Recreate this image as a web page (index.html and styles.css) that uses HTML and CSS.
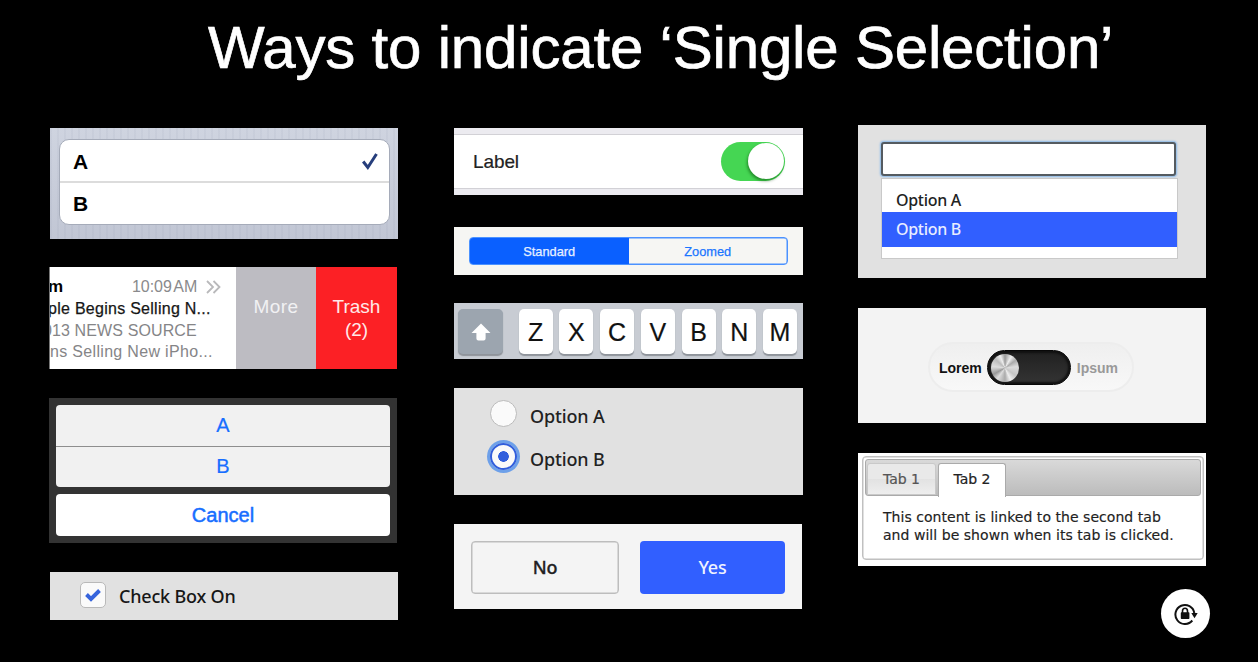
FILE: index.html
```html
<!DOCTYPE html>
<html lang="en">
<head>
<meta charset="utf-8">
<title>Ways to indicate ‘Single Selection’</title>
<link rel="stylesheet" href="styles.css">
</head>
<body>
<main class="slide">
  <h1 class="title">Ways to indicate ‘Single Selection’</h1>
  <div class="columns">
    <div class="column column-left">
      <section class="panel table-panel">
        <div class="table-list">
          <div class="table-row"><span>A</span>
            <svg class="table-check" width="18" height="20" viewBox="0 0 18 20"><path d="M2.200 9.500 L6.800 15.500 L15.500 2" fill="none" stroke="#263e7c" stroke-width="3"/></svg>
          </div>
          <div class="table-row"><span>B</span></div>
        </div>
      </section>
      <section class="panel swipe-panel">
        <div class="mail">
          <div class="mail-head"><b class="mail-from">m</b><span class="mail-time">10:09 AM</span>
            <svg width="16" height="14" viewBox="0 0 16 14"><path d="M2 1 L8 7 L2 13 M8.500 1 L14.500 7 L8.500 13" fill="none" stroke="#b9b9bb" stroke-width="1.8"/></svg>
          </div>
          <div class="mail-subject">ple Begins Selling N...</div>
          <div class="mail-source">013 NEWS SOURCE</div>
          <div class="mail-preview">ns Selling New iPho...</div>
        </div>
        <div class="action more">More</div>
        <div class="action trash">Trash<br>(2)</div>
      </section>
      <section class="panel sheet-panel">
        <div class="sheet-group">
          <div class="sheet-item">A</div>
          <div class="sheet-item">B</div>
        </div>
        <div class="sheet-cancel">Cancel</div>
      </section>
      <section class="panel checkbox-panel">
        <span class="checkbox"><svg width="18" height="14" viewBox="0 0 18 14"><path d="M2.500 6.500 L7 11 L15.500 2.500" fill="none" stroke="#3664dc" stroke-width="3.900"/></svg></span>
        <span class="checkbox-label">Check Box On</span>
      </section>
    </div>

    <div class="column column-middle">
      <section class="panel switch-panel">
        <div class="switch-row"><span class="switch-label">Label</span><span class="switch"><span class="switch-knob"></span></span></div>
      </section>
      <section class="panel segment-panel">
        <div class="segments"><span class="segment active">Standard</span><span class="segment">Zoomed</span></div>
      </section>
      <section class="panel keyboard-panel">
        <span class="key shift"><svg width="20" height="18" viewBox="0 0 20 18"><path d="M10 .5 L19.500 10 H14.600 V15.500 Q14.600 17.500 12.600 17.500 H7.400 Q5.400 17.500 5.400 15.500 V10 H.5 Z" fill="#fff"/></svg></span>
        <span class="key">Z</span><span class="key">X</span><span class="key">C</span><span class="key">V</span><span class="key">B</span><span class="key">N</span><span class="key">M</span>
      </section>
      <section class="panel radio-panel">
        <div class="radio-row"><span class="radio"></span><span>Option A</span></div>
        <div class="radio-row"><span class="radio selected"></span><span>Option B</span></div>
      </section>
      <section class="panel button-panel">
        <span class="button button-no">No</span>
        <span class="button button-yes">Yes</span>
      </section>
    </div>

    <div class="column column-right">
      <section class="panel select-panel">
        <div class="select-field"></div>
        <div class="select-menu">
          <div class="option">Option A</div>
          <div class="option highlighted">Option B</div>
        </div>
      </section>
      <section class="panel slider-panel">
        <div class="pill">
          <span class="pill-on">Lorem</span>
          <span class="slider"><span class="slider-knob"></span></span>
          <span class="pill-off">Ipsum</span>
        </div>
      </section>
      <section class="panel tabs-panel">
        <div class="tabs-box">
          <div class="tab-bar"><span class="tab">Tab 1</span><span class="tab current">Tab 2</span></div>
          <p class="tab-content">This content is linked to the second tab<br>and will be shown when its tab is clicked.</p>
        </div>
      </section>
      <div class="rotation-lock">
        <svg width="24" height="22" viewBox="0 0 24 22">
          <path d="M18.300 17.500 A9.500 9.500 0 1 1 20.300 10" fill="none" stroke="#111" stroke-width="2"/>
          <path d="M17.300 10 H23.700 L20.500 15.200 Z" fill="#111"/>
          <rect x="6.800" y="9.200" width="8.600" height="6.800" rx=".7" fill="#111"/>
          <path d="M8.500 10 V8 A2.500 2.700 0 0 1 13.500 8 V10" fill="none" stroke="#111" stroke-width="1.600"/>
        </svg>
      </div>
    </div>
  </div>
</main>
</body>
</html>
```

FILE: styles.css
```css
* { box-sizing: border-box; }
body { margin: 0; background: #000; font-family: "Liberation Sans", Arial, sans-serif; }
.slide { width: 1258px; height: 662px; overflow: hidden; background: #000; }
.title { margin: 0; height: 125px; padding: 13px 0 0 208px; color: #fff; font-size: 60px; line-height: 69px; font-weight: 400; white-space: nowrap; letter-spacing: -.18px; -webkit-text-stroke: .7px #fff; }
.columns { display: grid; grid-template-columns: 348px 349px 348px; column-gap: 56px; padding-left: 50px; align-items: start; }
.column { display: flex; flex-direction: column; }
.column-left, .column-middle { padding-top: 3px; }
.column-right { margin-left: -1px; margin-right: 1px; }
.panel { overflow: hidden; flex: none; }

.table-panel { height: 111px; padding: 11px 8px 0 9px; background: repeating-linear-gradient(90deg, rgba(90,100,130,.05) 0 2px, transparent 2px 7px), linear-gradient(#cfd4e0, #c1c6d4); }
.table-list { height: 86px; background: #fff; border: 1.500px solid #a5abb9; border-radius: 10px; }
.table-row { height: 42px; display: flex; align-items: center; justify-content: space-between; padding: 1px 10px 0 13px; font-size: 21px; font-weight: 700; }
.table-row + .table-row { margin-top: -1px; border-top: 2px solid #dcdcdc; padding-top: 1px; }

.swipe-panel { width: 348px; height: 102px; margin: 28px 0 0 -1px; display: flex; background: #fff; }
.mail { width: 187px; padding-top: 8px; overflow: hidden; white-space: nowrap; font-size: 16px; border-left: 1px solid #777; }
.mail > div { height: 22px; line-height: 22px; }
.mail .mail-head { height: 23px; display: flex; align-items: center; }
.mail-from { width: 84px; margin-left: -2px; font-size: 17px; }
.mail-time { color: #8a8a8c; width: 73px; letter-spacing: -.05px; word-spacing: -2px; }
.mail-subject { margin-left: -2px; color: #161616; letter-spacing: .27px; -webkit-text-stroke: .25px #161616; }
.mail .mail-source { height: 21px; line-height: 21px; margin-left: -7px; color: #858587; letter-spacing: .12px; }
.mail-preview { color: #858587; letter-spacing: .32px; }
.action { width: 81px; padding-top: 28px; text-align: center; color: #fff; font-size: 19px; line-height: 23px; }
.more { background: #bdbcc2; color: #f1f1f3; width: 80px; letter-spacing: .4px; }
.trash { background: #fc2025; color: #ffe9e9; }

.sheet-panel { width: 348px; height: 145px; margin: 29px 0 0 -1px; padding: 7px; background: #333; color: #176eff; font-size: 20px; text-align: center; }
.sheet-group { height: 82px; border-radius: 4px; background: #f1f1f1; -webkit-text-stroke: .2px #176eff; }
.sheet-item { height: 41px; line-height: 41px; }
.sheet-item + .sheet-item { border-top: 1px solid #8e8e8e; line-height: 39px; }
.sheet-cancel { height: 42px; margin-top: 7px; border-radius: 4px; background: #fff; line-height: 43px; -webkit-text-stroke: .5px #176eff; }

.checkbox-panel { height: 48px; margin-top: 29px; padding-left: 30px; display: flex; align-items: center; background: #e1e1e1; font: 500 18px "Noto Sans", sans-serif; letter-spacing: -.2px; color: #161616; }
.checkbox { width: 26px; height: 26px; margin: -2px 13px 0 0; border: 1px solid #b9b9b9; border-radius: 5px; background: #fafafa; display: flex; align-items: center; justify-content: center; }

.switch-panel { height: 67px; padding: 6px 0; background: #ecebf0; }
.switch-row { height: 55px; display: flex; align-items: center; justify-content: space-between; padding: 0 18px 0 19px; background: #fff; border: solid #d2d1d6; border-width: 1px 0; }
.switch-label { font-size: 19px; color: #222; letter-spacing: -.1px; -webkit-text-stroke: .2px #222; }
.switch { width: 64px; height: 39px; padding: 1px; margin-top: -1px; border-radius: 20px; background: #45d653; display: flex; justify-content: flex-end; }
.switch-knob { width: 36px; height: 36px; border-radius: 50%; background: #fff; box-shadow: -1px 2px 3px rgba(0,70,0,.5); }

.segment-panel { height: 48px; margin-top: 32px; padding: 10px 15px; background: #f6f6f3; }
.segments { height: 28px; display: flex; border: 1px solid #4b92ff; box-shadow: inset 0 0 0 .5px #4b92ff; border-radius: 4px; overflow: hidden; }
.segment { flex: 1; text-align: center; font-size: 12.800px; line-height: 27px; color: #1a75ff; -webkit-text-stroke: .25px currentColor; }
.segment.active { background: #0a60ff; color: #e7f0ff; }

.keyboard-panel { height: 56px; margin-top: 28px; padding: 6px 6px 0 4px; display: flex; justify-content: space-between; background: #c8ccd3; }
.key { width: 34px; height: 45px; border-radius: 5px; background: #fff; box-shadow: 0 1.500px 1px #8f949b; text-align: center; font-size: 25px; line-height: 46px; color: #111; -webkit-text-stroke: .2px #111; }
.key.shift { width: 45px; margin-right: 9px; background: #9ca5af; display: flex; align-items: center; justify-content: center; }

.radio-panel { height: 107px; margin-top: 29px; padding: 5px 0 0 36px; background: #e1e1e1; font: 500 18px "Noto Sans", sans-serif; letter-spacing: -.15px; color: #222; }
.radio-row { height: 43px; display: flex; align-items: center; gap: 13px; }
.radio-row span:last-child { padding-top: 2px; }
.radio { width: 27px; height: 27px; margin-top: -2px; border-radius: 50%; border: 1px solid #bbb; background: #fafafa; }
.radio.selected { border: 2px solid #315edc; background: radial-gradient(circle, #315edc 5px, #fafafa 5.600px); box-shadow: 0 0 0 3px #6da0e9; }

.button-panel { width: 348px; height: 85px; margin-top: 29px; padding: 17px 17px 0; display: flex; justify-content: space-between; background: #f4f4f4; font: 500 18px "Noto Sans", sans-serif; letter-spacing: -.2px; }
.button { height: 53px; line-height: 52px; border-radius: 4px; text-align: center; }
.button-no { width: 148px; border: 1px solid #bdbdbd; box-shadow: inset 0 0 0 .5px #bdbdbd; line-height: 50px; color: #222; -webkit-text-stroke: .3px #222; }
.button-yes { width: 145px; background: #315fff; color: #f0f3ff; }

.select-panel { height: 153px; padding: 17px 29px 0 23px; background: #e1e1e1; font: 500 16px "Noto Sans", sans-serif; letter-spacing: -.3px; }
.select-field { width: 295px; height: 34px; border: 2px solid #555b60; border-radius: 3px; background: #fff; box-shadow: 0 0 2px 1px #88b9ea; }
.select-menu { width: 297px; height: 81px; margin-top: 2px; padding-top: 8px; border: 1px solid #c9c9c9; background: #fff; color: #222; }
.option { height: 25px; line-height: 26px; padding-left: 14px; }
.option.highlighted { height: 35px; line-height: 35px; background: #315fff; color: #e8edff; }

.slider-panel { height: 115px; margin-top: 30px; padding-left: 70px; display: flex; align-items: center; background: #f3f3f3; }
.pill { width: 206px; height: 50px; margin-top: 3px; padding: 0 14px 0 9px; display: flex; align-items: center; justify-content: space-between; border-radius: 25px; border: 2px solid #ededed; background: linear-gradient(#efefef, #f8f8f8); font-size: 14px; font-weight: 700; }
.pill span { flex: none; }
.pill-on, .pill-off { padding-top: 2px; }
.pill-on { color: #111; }
.pill-off { color: #999; }
.slider { width: 84px; height: 35px; padding: 3px; border-radius: 18px; background: linear-gradient(#202020, #343434); border: 1px solid #080808; box-shadow: inset 0 0 2px 2px #111; }
.slider-knob { display: block; width: 28px; height: 28px; border-radius: 50%; background: conic-gradient(#999, #eee 8%, #aaa 15%, #ddd 23%, #c5c5c5 35%, #eee 43%, #aaa 50%, #ddd 60%, #999 67%, #ddd 77%, #bbb 87%, #eee 94%, #999); }

.tabs-panel { height: 113px; margin-top: 30px; padding: 3px 2px 0 4px; background: #fff; font-family: "DejaVu Sans", Verdana, sans-serif; color: #222; }
.tabs-box { height: 104px; padding: 2px; border: 1px solid #c0c0c0; box-shadow: inset 0 0 0 .5px #c0c0c0; border-radius: 4px; }
.tab-bar { height: 37px; padding: 3px 0 0 1px; display: flex; border: 1px solid #aaa; border-radius: 3px; background: linear-gradient(#d9d9d9, #bcbcbc); font-size: 14px; }
.tab { width: 69px; height: 32px; margin-right: 2px; border: 1px solid #c9c9c9; border-radius: 3px 3px 0 0; line-height: 30px; text-align: center; color: #555; background: linear-gradient(#e9e9e9 50%, #e2e2e2 50%, #eee); -webkit-text-stroke: .2px currentColor; }
.tab.current { width: 68px; height: 34px; border: 1px solid #aaa; border-bottom: 0; background: #fff; color: #222; }
.tab-content { margin: 13px 0 0 18px; font-size: 14px; line-height: 17.500px; white-space: nowrap; letter-spacing: .04px; -webkit-text-stroke: .15px #222; }

.rotation-lock { width: 49px; height: 49px; margin: 23px -4px 0 auto; border-radius: 50%; background: #fff; display: flex; align-items: center; justify-content: center; }
```
